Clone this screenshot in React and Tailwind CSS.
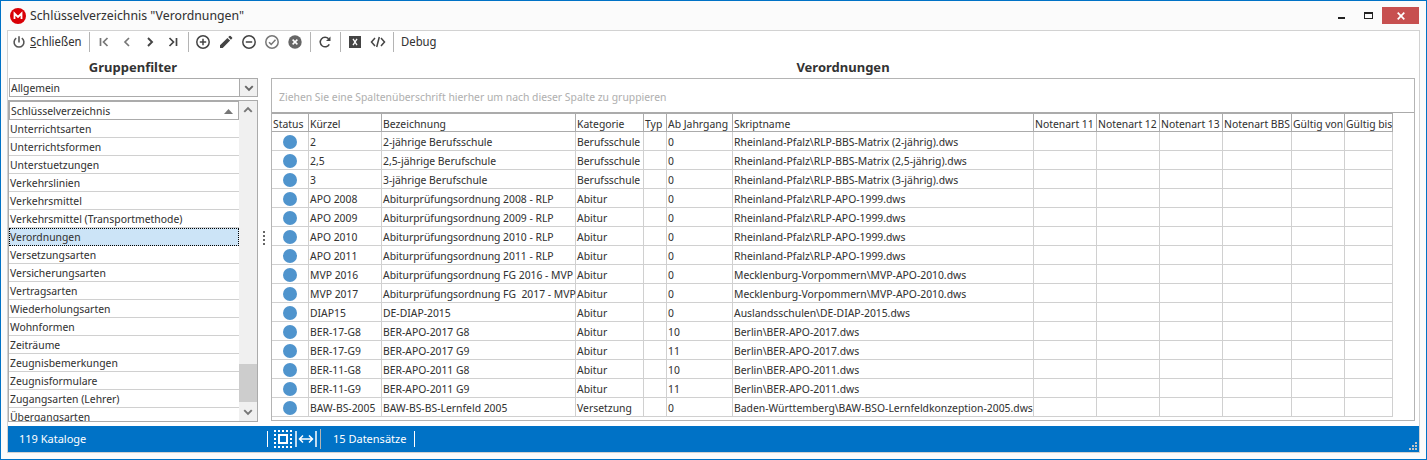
const groups = [
  "Unterrichtsarten", "Unterrichtsformen", "Unterstuetzungen", "Verkehrslinien", "Verkehrsmittel",
  "Verkehrsmittel (Transportmethode)", "Verordnungen", "Versetzungsarten", "Versicherungsarten",
  "Vertragsarten", "Wiederholungsarten", "Wohnformen", "Zeiträume", "Zeugnisbemerkungen",
  "Zeugnisformulare", "Zugangsarten (Lehrer)", "Übergangsarten",
];

const rows = [
  ["2", "2-jährige Berufsschule", "Berufsschule", "", "0", "Rheinland-Pfalz\\RLP-BBS-Matrix (2-jährig).dws"],
  ["2,5", "2,5-jährige Berufschule", "Berufsschule", "", "0", "Rheinland-Pfalz\\RLP-BBS-Matrix (2,5-jährig).dws"],
  ["3", "3-jährige Berufschule", "Berufsschule", "", "0", "Rheinland-Pfalz\\RLP-BBS-Matrix (3-jährig).dws"],
  ["APO 2008", "Abiturprüfungsordnung 2008 - RLP", "Abitur", "", "0", "Rheinland-Pfalz\\RLP-APO-1999.dws"],
  ["APO 2009", "Abiturprüfungsordnung 2009 - RLP", "Abitur", "", "0", "Rheinland-Pfalz\\RLP-APO-1999.dws"],
  ["APO 2010", "Abiturprüfungsordnung 2010 - RLP", "Abitur", "", "0", "Rheinland-Pfalz\\RLP-APO-1999.dws"],
  ["APO 2011", "Abiturprüfungsordnung 2011 - RLP", "Abitur", "", "0", "Rheinland-Pfalz\\RLP-APO-1999.dws"],
  ["MVP 2016", "Abiturprüfungsordnung FG 2016 - MVP", "Abitur", "", "0", "Mecklenburg-Vorpommern\\MVP-APO-2010.dws"],
  ["MVP 2017", "Abiturprüfungsordnung FG  2017 - MVP", "Abitur", "", "0", "Mecklenburg-Vorpommern\\MVP-APO-2010.dws"],
  ["DIAP15", "DE-DIAP-2015", "Abitur", "", "0", "Auslandsschulen\\DE-DIAP-2015.dws"],
  ["BER-17-G8", "BER-APO-2017 G8", "Abitur", "", "10", "Berlin\\BER-APO-2017.dws"],
  ["BER-17-G9", "BER-APO-2017 G9", "Abitur", "", "11", "Berlin\\BER-APO-2017.dws"],
  ["BER-11-G8", "BER-APO-2011 G8", "Abitur", "", "10", "Berlin\\BER-APO-2011.dws"],
  ["BER-11-G9", "BER-APO-2011 G9", "Abitur", "", "11", "Berlin\\BER-APO-2011.dws"],
  ["BAW-BS-2005", "BAW-BS-BS-Lernfeld 2005", "Versetzung", "", "0", "Baden-Württemberg\\BAW-BSO-Lernfeldkonzeption-2005.dws"],
];

const columns = [
  ["Status", "w-[37px]"], ["Kürzel", "w-[73px]"], ["Bezeichnung", "w-[194px]"], ["Kategorie", "w-[68px]"],
  ["Typ", "w-[23px]"], ["Ab Jahrgang", "w-[66px]"], ["Skriptname", "w-[301px]"], ["Notenart 11", "w-[63px]"],
  ["Notenart 12", "w-[63px]"], ["Notenart 13", "w-[63px]"], ["Notenart BBS", "w-[69px]"],
  ["Gültig von", "w-[53px]"], ["Gültig bis", "w-[48px]"],
];

function Icon({ children, className = "size-4" }) {
  return (
    <svg viewBox="0 0 16 16" className={className} fill="none" stroke="currentColor" strokeWidth="1.5" aria-hidden="true">
      {children}
    </svg>
  );
}

function ToolButton({ label, children, muted }) {
  return (
    <button type="button" aria-label={label} className={`flex h-5 w-[23px] items-center justify-center ${muted ? "text-[#777]" : "text-[#444]"}`}>
      <Icon>{children}</Icon>
    </button>
  );
}

function Divider() {
  return <span className="h-5 w-px bg-[#b4b4b4]" />;
}

function Toolbar() {
  return (
    <div className="flex h-[22px] shrink-0 items-center text-xs text-[#333]">
      <button type="button" className="flex h-5 w-[81px] items-center gap-1 pl-1">
        <Icon className="size-[14px] text-[#555]">
          <path d="M8 1.5v7M4.8 3.6a5.6 5.6 0 1 0 6.4 0" strokeWidth="1.8" />
        </Icon>
        <span><u>S</u>chließen</span>
      </button>
      <Divider />
      <div className="flex pr-1 pl-[2px]">
        <ToolButton label="Erster" muted><path d="M4.500 4v8M11.500 4l-4 4 4 4" strokeWidth="1.700" /></ToolButton>
        <ToolButton label="Zurück" muted><path d="M10 4L6 8l4 4" strokeWidth="1.700" /></ToolButton>
        <ToolButton label="Weiter"><path d="M6 4l4 4-4 4" strokeWidth="1.900" /></ToolButton>
        <ToolButton label="Letzter"><path d="M11.500 4v8M4.500 4l4 4-4 4" strokeWidth="1.700" /></ToolButton>
      </div>
      <Divider />
      <div className="flex pr-1 pl-[2px]">
        <ToolButton label="Neu"><circle cx="8" cy="8" r="6.200" /><path d="M8 4.800v6.400M4.800 8h6.400" /></ToolButton>
        <ToolButton label="Bearbeiten">
          <path stroke="none" fill="currentColor" d="M2 14v-2.700l7.400-7.400 2.700 2.700L4.700 14zM10.200 3.100l1.200-1.200q.6-.5 1.200 0l1.500 1.500q.5.600 0 1.200l-1.200 1.200z" />
        </ToolButton>
        <ToolButton label="Löschen"><circle cx="8" cy="8" r="6.200" /><path d="M4.800 8h6.400" /></ToolButton>
        <ToolButton label="Speichern" muted><circle cx="8" cy="8" r="6.200" /><path d="M5 8.200l2.200 2.200 4.300-4.600" /></ToolButton>
        <ToolButton label="Abbrechen">
          <circle cx="8" cy="8" r="6.700" fill="#666" stroke="none" />
          <path d="M5.600 5.600l4.800 4.800M10.400 5.600l-4.800 4.800" stroke="#fff" />
        </ToolButton>
      </div>
      <Divider />
      <div className="flex pr-1 pl-[2px]">
        <ToolButton label="Aktualisieren">
          <path d="M12.300 10.300A4.800 4.800 0 1 1 11.600 4.800" />
          <path d="M13.500 2.600v4.500H9z" fill="currentColor" stroke="none" />
        </ToolButton>
      </div>
      <Divider />
      <div className="flex pr-1 pl-[2px]">
        <ToolButton label="Excel">
          <path d="M2 2h12v12H2z" fill="currentColor" stroke="none" />
          <path d="M6 4.800l4 6.400M10 4.800l-4 6.400" stroke="#fff" strokeWidth="1.300" />
        </ToolButton>
        <ToolButton label="Quelltext"><path d="M5 4L1.500 8 5 12M11 4l3.500 4-3.500 4M9.300 3L6.700 13" /></ToolButton>
      </div>
      <Divider />
      <button type="button" className="px-[7px]">Debug</button>
    </div>
  );
}

function GroupPanel() {
  return (
    <section className="flex w-[250px] shrink-0 flex-col">
      <h2 className="h-[25px] shrink-0 text-center font-['Noto_Sans',sans-serif] text-[13px] leading-7 font-bold text-[#333]">Gruppenfilter</h2>
      <div className="ml-px flex h-[19px] shrink-0 border border-[#ababab]">
        <select aria-label="Gruppe" className="min-w-0 flex-1 appearance-none bg-white pt-px pl-px outline-none">
          <option>Allgemein</option>
        </select>
        <span className="flex w-[18px] items-center justify-center border-l border-[#ababab] bg-[#f0f0f0] text-[#666]">
          <Icon className="size-3"><path d="M3 5.500l5 5 5-5" strokeWidth="2.600" /></Icon>
        </span>
      </div>
      <div className="mt-[3px] flex min-h-0 flex-1 overflow-hidden border border-[#ababab]">
        <div className="min-w-0 flex-1 overflow-hidden">
          <button type="button" className="flex h-[19px] w-full items-center justify-between border border-[#ababab] px-px pt-px">
            Schlüsselverzeichnis
            <svg viewBox="0 0 9 5" className="mr-1 h-[5px] w-[9px]" fill="#777"><path d="M4.500 0L9 5H0z" /></svg>
          </button>
          <ul>
            {groups.map((g) => (
              <li key={g} className={g === "Verordnungen"
                ? "h-[18px] border border-dotted border-black bg-[#cce4f7] leading-4 whitespace-nowrap"
                : "h-[18px] border-b border-[#d0d0d0] px-px leading-[18px] whitespace-nowrap"}>{g}</li>
            ))}
          </ul>
        </div>
        <div className="flex w-[18px] flex-col bg-[#f0f0f0] text-[#777]">
          <span className="flex h-[17px] items-center justify-center">
            <Icon className="size-3"><path d="M3 10.500l5-5 5 5" strokeWidth="2.600" /></Icon>
          </span>
          <span className="flex-1" />
          <span className="h-[38px] bg-[#cdcdcd]" />
          <span className="flex h-[19px] items-center justify-center">
            <Icon className="size-3"><path d="M3 5.500l5 5 5-5" strokeWidth="2.600" /></Icon>
          </span>
        </div>
      </div>
    </section>
  );
}

function DataPanel() {
  return (
    <section className="mr-1 mb-px flex min-w-0 flex-1 flex-col">
      <h2 className="h-[25px] shrink-0 text-center font-['Noto_Sans',sans-serif] text-[13px] leading-7 font-bold text-[#333]">Verordnungen</h2>
      <div className="flex min-h-0 flex-1 flex-col overflow-hidden border border-[#b4b4b4]">
        <p className="h-[34px] shrink-0 border-b border-[#ababab] px-[7px] leading-[36px] text-[#b0b0b0]">
          Ziehen Sie eine Spaltenüberschrift hierher um nach dieser Spalte zu gruppieren
        </p>
        <table className="w-[1121px] table-fixed border-separate border-spacing-0 whitespace-pre">
          <thead>
            <tr className="h-[19px]">
              {columns.map(([name, width]) => (
                <th key={name} scope="col" className={`${width} border-t border-r border-b border-[#ababab] p-0 pt-[2px] pl-px text-left leading-[15px] font-normal`}>{name}</th>
              ))}
            </tr>
          </thead>
          <tbody>
            {rows.map((r, i) => (
              <tr key={i} className="h-[19px]">
                <td className="border-r border-b border-[#d0d0d0] p-0 pt-[2px]">
                  <span className="mx-auto block size-[14px] rounded-full bg-[#4f94cd]" />
                </td>
                {[...r, "", "", "", "", "", ""].map((c, j) => (
                  <td key={j} className="border-r border-b border-[#d0d0d0] p-0 pt-[2px] pl-px leading-[16px]">{c}</td>
                ))}
              </tr>
            ))}
          </tbody>
        </table>
      </div>
    </section>
  );
}

function StatusBar() {
  return (
    <footer className="flex h-[26px] shrink-0 items-center bg-[#0072c6] font-['Noto_Sans',sans-serif] text-[11px] text-white">
      <span className="w-[259px] pl-[11px]">119 Kataloge</span>
      <span className="h-4 w-px bg-white" />
      <svg viewBox="0 0 18 18" className="ml-[6px] size-[18px]" fill="none" stroke="#fff" strokeWidth="2">
        <path d="M0 1h18M0 17h18M1 0v18M17 0v18" strokeDasharray="2 2" />
        <path d="M5 5h8v8H5z" />
      </svg>
      <svg viewBox="0 0 22 16" className="ml-[3px] h-4 w-[22px]" fill="none" stroke="#fff" strokeWidth="1.500">
        <path d="M1 0v16M21 0v16M5 8h12M8 4.500L4.500 8 8 11.500M14 4.500L17.500 8 14 11.500" />
      </svg>
      <span className="ml-[3px] h-5 w-px bg-[#b4b4b4]" />
      <span className="pr-2 pl-3">15 Datensätze</span>
      <span className="h-4 w-px bg-white" />
      <svg viewBox="0 0 8 8" className="mr-[2px] mb-[2px] ml-auto size-2 self-end" fill="#c4c4c4">
        <path d="M6 0h2v2H6zM3 3h2v2H3zM6 3h2v2H6zM0 6h2v2H0zM3 6h2v2H3zM6 6h2v2H6z" />
      </svg>
    </footer>
  );
}

export default function App() {
  return (
    <div className="flex h-screen flex-col border border-[#0072c6] bg-[#fbfbfb] px-[6px] pb-[6px] font-['Noto_Sans_Display','DejaVu_Sans_Condensed',sans-serif] text-[11px] text-[#333]">
      <header className="flex h-[29px] shrink-0 items-center">
        <svg viewBox="0 0 16 16" className="ml-[3px] size-4">
          <circle cx="8" cy="8" r="8" fill="#d90007" />
          <path d="M4.500 11V5.500L8 9l3.500-3.500V11" fill="none" stroke="#fff" strokeWidth="1.800" />
        </svg>
        <h1 className="ml-1 flex-1 text-[13px]">Schlüsselverzeichnis "Verordnungen"</h1>
        <div className="flex items-center">
          <button type="button" aria-label="Minimieren" className="flex h-[17px] w-[27px] items-center justify-center">
            <svg viewBox="0 0 9 9" className="size-[9px]"><path d="M1 6h7v2H1z" fill="#222" /></svg>
          </button>
          <button type="button" aria-label="Maximieren" className="flex h-[17px] w-[27px] items-center justify-center">
            <svg viewBox="0 0 9 7" className="h-[7px] w-[9px]"><path d="M0 0h9v7H0zM1 2v4h7V2z" fill="#222" fillRule="evenodd" /></svg>
          </button>
          <button type="button" aria-label="Fenster schließen" className="mr-px flex h-[17px] w-[37px] items-center justify-center bg-[#c75050]">
            <svg viewBox="0 0 8 8" className="size-2"><path d="M.7.7l6.600 6.600M7.300.7L.7 7.300" stroke="#fff" strokeWidth="1.700" /></svg>
          </button>
        </div>
      </header>
      <div className="flex min-h-0 flex-1 flex-col border border-[#d2d2d2] bg-white">
        <Toolbar />
        <main className="mb-1 flex min-h-0 flex-1">
          <GroupPanel />
          <div className="flex w-[13px] shrink-0 flex-col items-center justify-center gap-[2px] pr-[2px]">
            <span className="size-[2px] bg-[#666]" />
            <span className="size-[2px] bg-[#666]" />
            <span className="size-[2px] bg-[#666]" />
            <span className="size-[2px] bg-[#666]" />
          </div>
          <DataPanel />
        </main>
        <StatusBar />
      </div>
    </div>
  );
}
